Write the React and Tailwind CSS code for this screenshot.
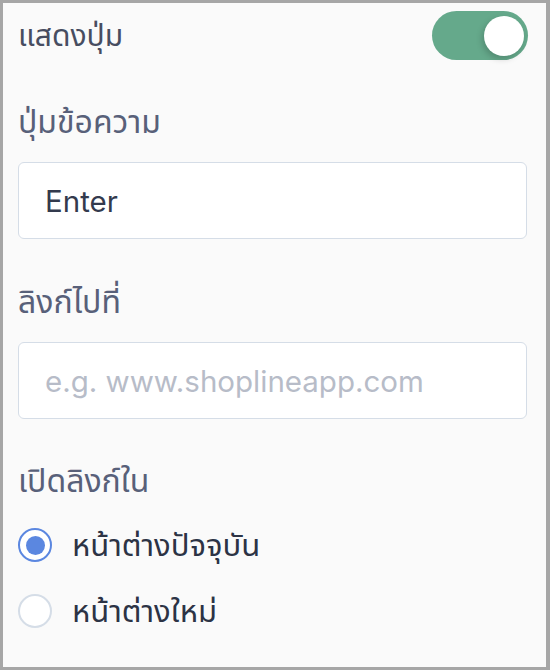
import React, { useState } from 'react';

const font = { fontFamily: 'Inter, "Noto Sans Thai", "Noto Sans", sans-serif' };

const Toggle = ({ on, onChange }) => (
  <button
    type="button"
    onClick={() => onChange(!on)}
    className={`flex h-[49px] w-[96px] items-center rounded-full px-[4px] ${on ? 'justify-end bg-[#65a98b]' : 'justify-start bg-[#d5dde7]'}`}
  >
    <span className="block h-[40px] w-[40px] rounded-full bg-white shadow-[-2px_3px_6px_rgba(0,0,0,0.18)]" />
  </button>
);

const Radio = ({ checked, label, onClick }) => (
  <label onClick={onClick} className="flex h-[34px] cursor-pointer items-center gap-[20px]">
    <span
      className={`flex h-[34px] w-[34px] items-center justify-center rounded-full border-2 bg-white ${checked ? 'border-[#5b87e0]' : 'border-[#d5dde7]'}`}
    >
      {checked && <span className="block h-[19px] w-[19px] rounded-full bg-[#5b87e0]" />}
    </span>
    <span className="text-[31px] leading-[34px] text-[#2c3345]">{label}</span>
  </label>
);

export default function App() {
  const [show, setShow] = useState(true);
  const [text, setText] = useState('Enter');
  const [link, setLink] = useState('');
  const [target, setTarget] = useState('current');

  return (
    <div style={font} className="h-[670px] w-[550px] border-t-[3px] border-b-[3px] border-l-[3px] border-r-[4px] border-[#a6a6a6] bg-[#fafafa] px-[15px]">
      <div className="flex items-center justify-between pt-[8px] pr-[3px]">
        <span className="text-[30px] leading-[49px] text-[#474d61]">แสดงปุ่ม</span>
        <Toggle on={show} onChange={setShow} />
      </div>

      <div className="mt-[44px] text-[32px] leading-[36px] text-[#586079]">ปุ่มข้อความ</div>
      <input
        value={text}
        onChange={(e) => setText(e.target.value)}
        className="mt-[22px] block h-[77px] w-[509px] rounded-[6px] border-[1.5px] border-[#d5dde7] bg-white px-[26px] text-[29.5px] text-[#333a4d] outline-none"
      />

      <div className="mt-[45px] text-[32px] leading-[36px] text-[#586079]">ลิงก์ไปที่</div>
      <input
        value={link}
        onChange={(e) => setLink(e.target.value)}
        placeholder="e.g. www.shoplineapp.com"
        className="mt-[22px] block h-[77px] w-[509px] rounded-[6px] border-[1.5px] border-[#d5dde7] bg-white px-[26px] text-[29.5px] text-[#333a4d] outline-none placeholder:text-[#b7bcc8]"
      />

      <div className="mt-[44px] text-[32px] leading-[36px] text-[#586079]">เปิดลิงก์ใน</div>
      <div className="mt-[29px] flex flex-col gap-[32px]">
        <Radio checked={target === 'current'} label="หน้าต่างปัจจุบัน" onClick={() => setTarget('current')} />
        <Radio checked={target === 'new'} label="หน้าต่างใหม่" onClick={() => setTarget('new')} />
      </div>
    </div>
  );
}
